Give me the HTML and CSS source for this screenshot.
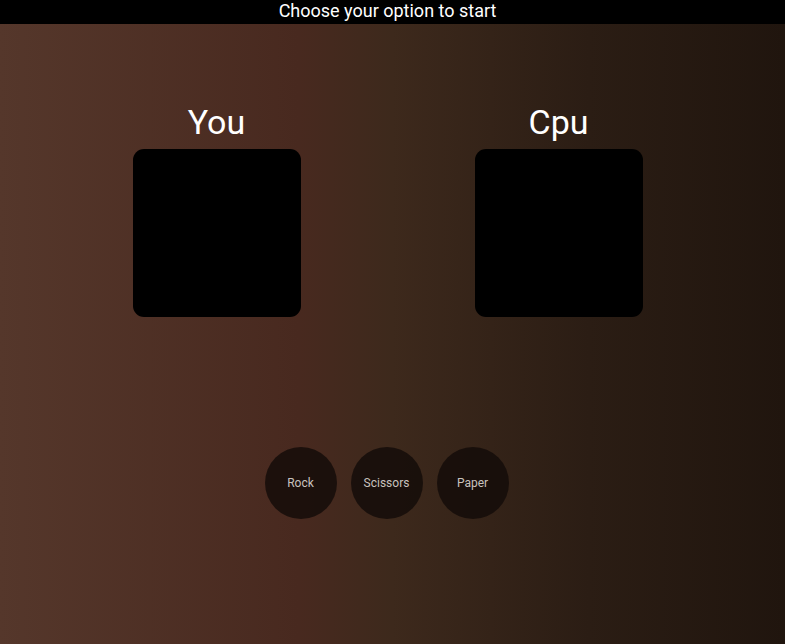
FILE: index.html
```html
<!DOCTYPE html>
<html>
<head>
<meta charset="utf-8">
<link rel="stylesheet" href="styles.css">
</head>
<body>
<header class="topbar">Choose your option to start</header>
<main class="game">
  <section class="players">
    <div class="player">
      <h2 class="player-name">You</h2>
      <div class="choice-box"></div>
    </div>
    <div class="player">
      <h2 class="player-name">Cpu</h2>
      <div class="choice-box"></div>
    </div>
  </section>
  <section class="options">
    <button class="option">Rock</button>
    <button class="option">Scissors</button>
    <button class="option">Paper</button>
  </section>
</main>
</body>
</html>
```
FILE: styles.css
```css
html, body {
  margin: 0;
  padding: 0;
  height: 100%;
}
body {
  font-family: Roboto, "Liberation Sans", sans-serif;
  background: linear-gradient(90deg, #55372b 0%, #48291f 38%, #3d291c 50%, #2b1d14 75%, #20150e 100%);
  color: #fff;
  display: flex;
  flex-direction: column;
}
.topbar {
  background: #000;
  height: 24px;
  line-height: 22px;
  font-size: 18px;
  text-align: center;
  padding-right: 10px;
}
.game {
  display: flex;
  flex-direction: column;
  align-items: center;
  padding-right: 10px;
}
.players {
  display: flex;
  gap: 174px;
  margin-top: 77px;
}
.player {
  display: flex;
  flex-direction: column;
  align-items: center;
}
.player-name {
  margin: 0;
  font-weight: 400;
  font-size: 34px;
  line-height: 42px;
  margin-bottom: 6px;
}
.choice-box {
  width: 168px;
  height: 168px;
  background: #000;
  border-radius: 11px;
}
.options {
  display: flex;
  gap: 14px;
  margin-top: 130px;
  padding-right: 2px;
}
.option {
  width: 72px;
  height: 72px;
  border-radius: 50%;
  border: none;
  background: rgba(18, 11, 8, 0.82);
  color: #c9c2be;
  font-family: Roboto, "Liberation Sans", sans-serif;
  font-size: 12px;
  padding: 0;
}
```
